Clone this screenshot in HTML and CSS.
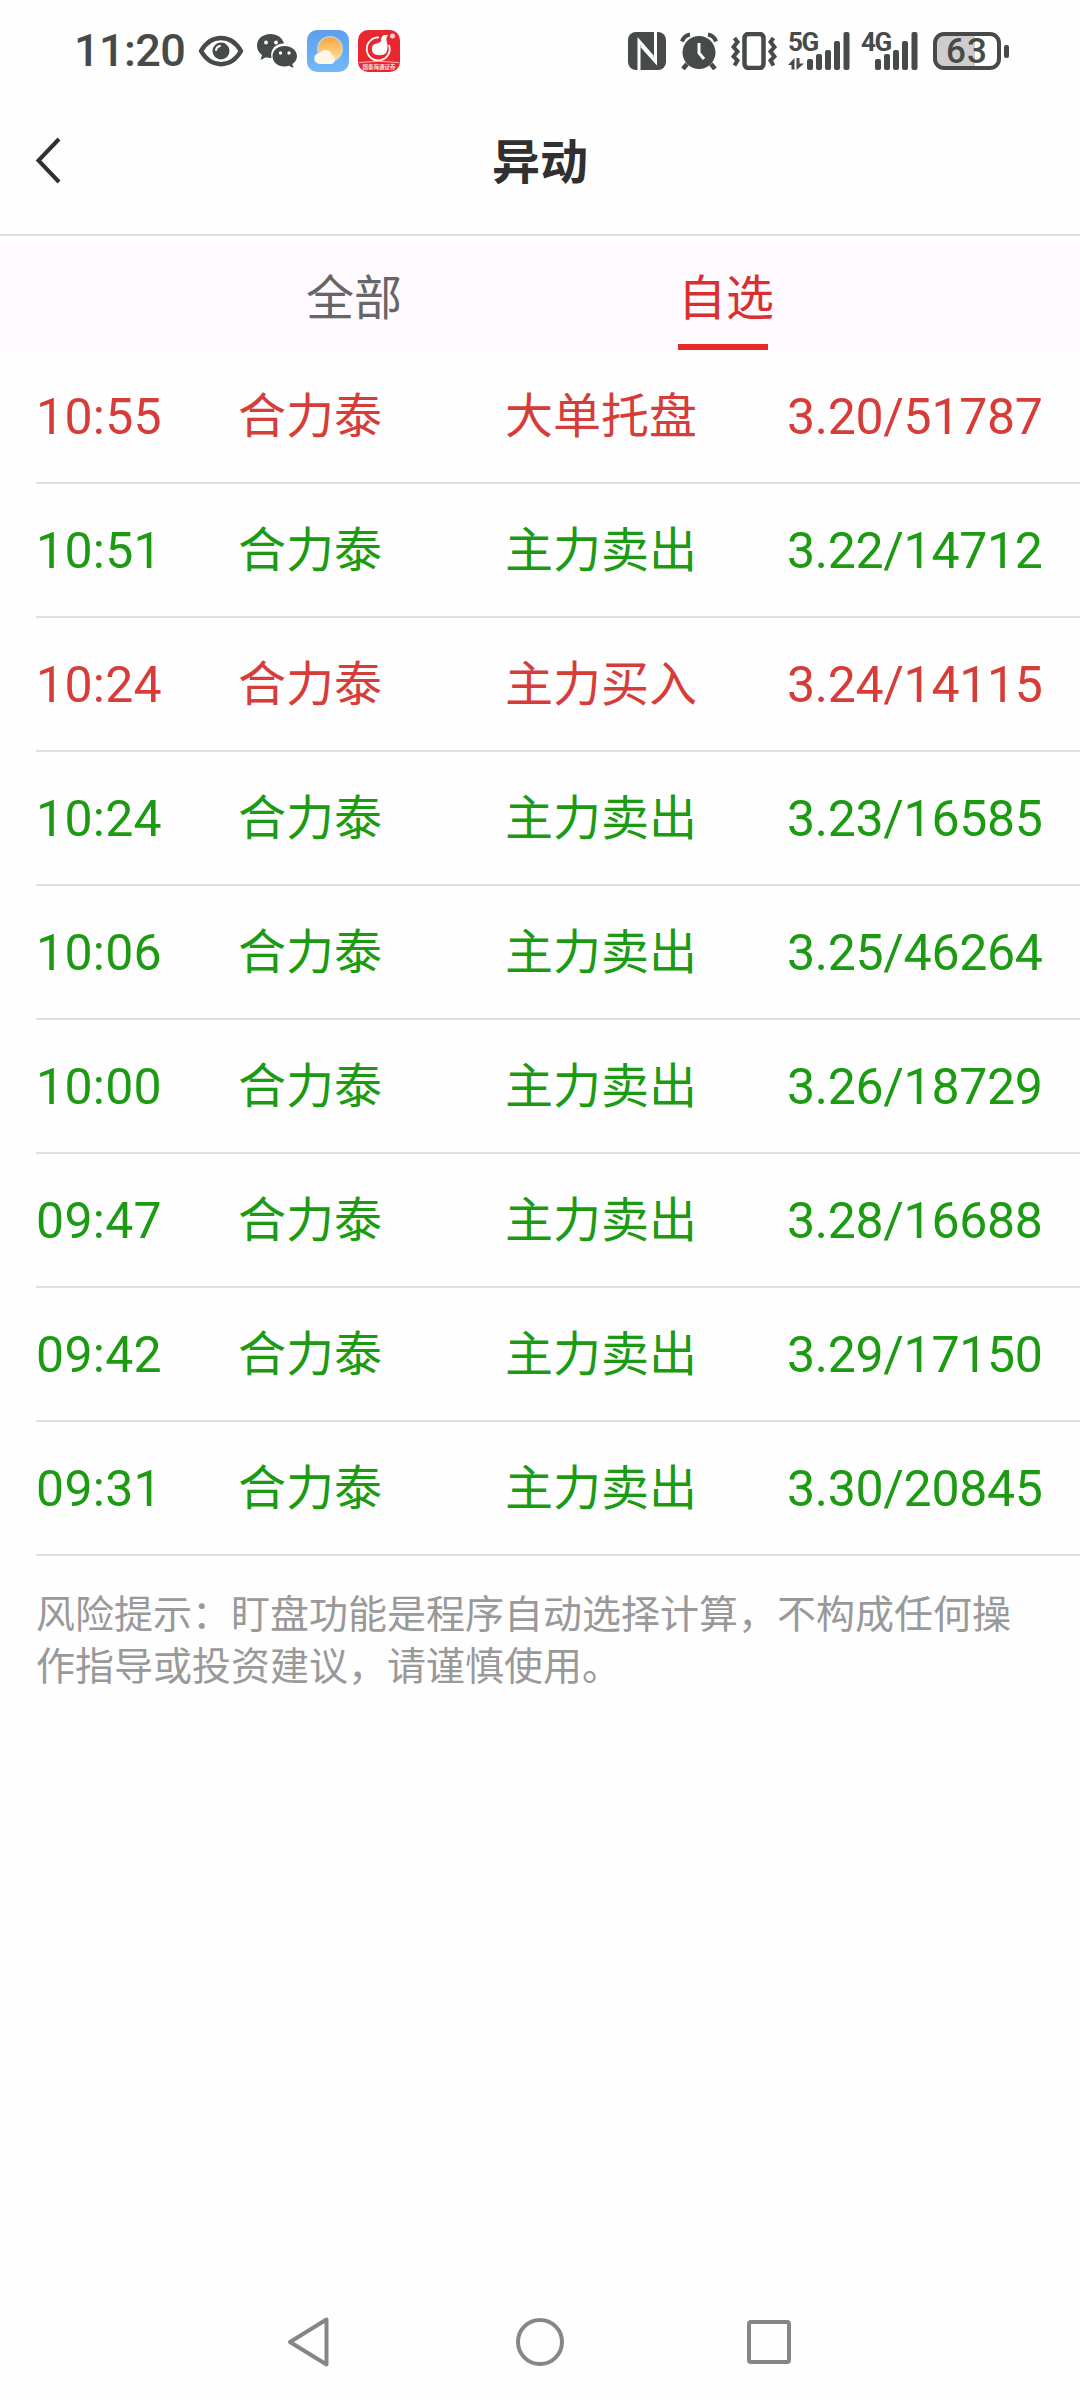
FILE: index.html
```html
<!DOCTYPE html>
<html lang="zh-CN">
<head>
<meta charset="utf-8">
<title>异动</title>
<link rel="stylesheet" href="styles.css">
</head>
<body>
<div class="status-bar">
  <div class="status-left">
    <span class="clock">11:20</span>
    <svg class="icon-eye" width="46" height="32" viewBox="0 0 46 32"><path d="M3 16C13-1.500 33-1.500 43 16C33 33.500 13 33.500 3 16Z" fill="none" stroke="#464b48" stroke-width="4.500" stroke-linejoin="round"/><circle cx="23" cy="16" r="8.500" fill="#464b48"/><path d="M18 15a5 5 0 0 1 4-4" fill="none" stroke="#fff" stroke-width="2" stroke-linecap="round"/></svg>
    <svg class="icon-chat" width="42" height="36" viewBox="0 0 42 36"><path d="M14.500 1C6.500 1 1 6 1 12.800c0 4 2 7.200 5 9.300L4.500 27l5.500-2.700c2 .5 3.500.7 5.500.6-2-9 5-14.500 12.500-14.300C26.500 4.500 21 1 14.500 1Z" fill="#464b48"/><path d="M28.500 13C21.500 13 16.500 17.500 16.500 23.300s5 10.200 12 10.200c1.500 0 3-.2 4.500-.7l4.500 2.200-1.200-3.900c2.800-1.900 4.700-4.600 4.700-7.800C41 17.500 35.500 13 28.500 13Z" fill="#464b48"/><g fill="#fff"><circle cx="10" cy="9.500" r="1.900"/><circle cx="20" cy="9.500" r="1.900"/><circle cx="24.500" cy="20" r="1.700"/><circle cx="33" cy="20" r="1.700"/></g></svg>
    <svg class="icon-weather" width="42" height="42" viewBox="0 0 42 42"><defs><linearGradient id="sky" x2="0" y2="1"><stop stop-color="#5c9fec"/><stop offset="1" stop-color="#72b9f8"/></linearGradient><linearGradient id="sun" x2="0" y2="1"><stop stop-color="#f8a63c"/><stop offset="1" stop-color="#fde39a"/></linearGradient></defs><rect width="42" height="42" rx="10" fill="url(#sky)"/><circle cx="23" cy="19" r="13" fill="#bcd6e6"/><circle cx="23" cy="19" r="11.800" fill="url(#sun)"/><path d="M13 34a5.500 5.500 0 0 1-.5-11 7 7 0 0 1 12.500 2 4.700 4.700 0 0 1-1 9Z" fill="#fff6e6"/></svg>
    <svg class="icon-broker" width="42" height="42" viewBox="0 0 42 42"><rect width="42" height="42" rx="10" fill="#e8272f"/><path d="M21 7.500A11.500 11.500 0 1 0 31 15" fill="none" stroke="#fff" stroke-width="1.800"/><path d="M15 15c2-2 6-1 8-4 0-3 1-6 4-6h3c-1 2-2 3-1.500 6 1.500 3 1.500 9-.5 12-3 3-10 3-13 0-1.500-3-1.500-6 0-8Z" fill="#fff"/><circle cx="34.500" cy="6" r="2.500" fill="#ffd5d5"/><path d="M1 32.500Q21 30 41 32.500" fill="none" stroke="#ffb5b5"/><text class="broker-name" x="21" y="39" text-anchor="middle">国泰海通证券</text></svg>
  </div>
  <div class="status-right">
    <svg class="icon-nfc" width="38" height="38" viewBox="0 0 38 38"><rect width="38" height="38" rx="8" fill="#464b48"/><path d="M11 38V9L25 25M27.500 0V29.500L13.500 14" fill="none" stroke="#fff" stroke-width="3"/></svg>
    <svg class="icon-alarm" width="38" height="38" viewBox="0 0 38 38"><circle cx="19" cy="20.500" r="16.500" fill="#464b48"/><path d="M2 9.500Q4 3.500 10 2.500M36 9.500Q34 3.500 28 2.500" fill="none" stroke="#464b48" stroke-width="4"/><path d="M7 32l-4 5M31 32l4 5" stroke="#464b48" stroke-width="4.500"/><path d="M19 11v10l5 6" fill="none" stroke="#fff" stroke-width="3"/></svg>
    <svg class="icon-vibrate" width="46" height="38" viewBox="0 0 46 38"><rect x="13.500" y="2" width="19" height="34" rx="4" fill="none" stroke="#464b48" stroke-width="4.500"/><path d="M3.500 6l3 4-4 5 4 4.500-4 5 4 4-3 5M42.500 6l-3 4 4 5-4 4.500 4 5-4 4 3 5" fill="none" stroke="#464b48" stroke-width="4"/></svg>
    <div class="signal signal-5g"><span class="net">5G</span>
      <svg width="62" height="38" viewBox="0 0 62 38"><g fill="#464b48"><rect x="19" y="27" width="6" height="11" rx="2"/><rect x="28" y="22" width="6" height="16" rx="2"/><rect x="37" y="18" width="6" height="20" rx="2"/><rect x="46" y="9" width="6" height="29" rx="2"/><rect x="55.500" y="0" width="6" height="38" rx="2"/><path d="M0 33l6.500-7v11.500H3.500V33ZM8.500 26h3v5.500H16l-7.500 6.500Z"/></g></svg></div>
    <div class="signal signal-4g"><span class="net">4G</span>
      <svg width="57" height="38" viewBox="0 0 57 38"><g fill="#464b48"><rect x="14" y="27" width="6" height="11" rx="2"/><rect x="23" y="22" width="6" height="16" rx="2"/><rect x="32" y="18" width="6" height="20" rx="2"/><rect x="41" y="9" width="6" height="29" rx="2"/><rect x="50.500" y="0" width="6" height="38" rx="2"/></g></svg></div>
    <div class="battery"><span class="battery-body">63</span><span class="battery-nub"></span></div>
  </div>
</div>
<header class="title-bar">
  <svg class="back" width="28" height="48" viewBox="0 0 28 48"><path d="M25 3L4.500 24.500 25 46" fill="none" stroke="#303030" stroke-width="4"/></svg>
  <h1>异动</h1>
</header>
<nav class="tabs"><span class="tab tab-all">全部</span><span class="tab tab-active">自选</span></nav>
<main class="list">
  <div class="row up"><span class="time">10:55</span><span>合力泰</span><span>大单托盘</span><span class="quote">3.20/51787</span></div>
  <div class="row down"><span class="time">10:51</span><span>合力泰</span><span>主力卖出</span><span class="quote">3.22/14712</span></div>
  <div class="row up"><span class="time">10:24</span><span>合力泰</span><span>主力买入</span><span class="quote">3.24/14115</span></div>
  <div class="row down"><span class="time">10:24</span><span>合力泰</span><span>主力卖出</span><span class="quote">3.23/16585</span></div>
  <div class="row down"><span class="time">10:06</span><span>合力泰</span><span>主力卖出</span><span class="quote">3.25/46264</span></div>
  <div class="row down"><span class="time">10:00</span><span>合力泰</span><span>主力卖出</span><span class="quote">3.26/18729</span></div>
  <div class="row down"><span class="time">09:47</span><span>合力泰</span><span>主力卖出</span><span class="quote">3.28/16688</span></div>
  <div class="row down"><span class="time">09:42</span><span>合力泰</span><span>主力卖出</span><span class="quote">3.29/17150</span></div>
  <div class="row down"><span class="time">09:31</span><span>合力泰</span><span>主力卖出</span><span class="quote">3.30/20845</span></div>
</main>
<p class="notice">风险提示：盯盘功能是程序自动选择计算，不构成任何操<br>作指导或投资建议，请谨慎使用。</p>
<footer class="nav-bar">
  <svg width="46" height="54" viewBox="0 0 46 54"><path d="M40.500 4.500V49.500L4 27Z" fill="none" stroke="#858686" stroke-width="4" stroke-linejoin="round"/></svg>
  <svg width="48" height="48" viewBox="0 0 48 48"><circle cx="24" cy="24" r="22" fill="none" stroke="#858686" stroke-width="4"/></svg>
  <svg width="44" height="44" viewBox="0 0 44 44"><rect x="2" y="2" width="40" height="40" rx="2" fill="none" stroke="#858686" stroke-width="4"/></svg>
</footer>
</body>
</html>
```
FILE: styles.css
```css
* { box-sizing: border-box; }
body {
  margin: 0;
  width: 1080px;
  height: 2400px;
  display: flex;
  flex-direction: column;
  background: #fefefe;
  font-family: Roboto, "Noto Sans CJK SC", sans-serif;
  font-size: 48px;
}
svg { display: block; flex: none; }
.status-bar {
  height: 90px;
  padding: 12px 71px 0 74px;
  display: flex;
  justify-content: space-between;
  align-items: center;
  color: #464b48;
}
.status-left, .status-right { display: flex; align-items: center; }
.clock { width: 124px; font-size: 45px; font-weight: 500; line-height: 50px; letter-spacing: -0.6px; }
.icon-chat { margin-left: 12px; }
.icon-weather { margin-left: 9px; }
.icon-broker { margin-left: 9px; }
.broker-name { font-family: "Noto Sans CJK SC", sans-serif; font-size: 5.5px; font-weight: 700; fill: #ffe3e3; }
.icon-alarm { margin-left: 14px; }
.icon-vibrate { margin-left: 13px; }
.signal { position: relative; height: 38px; }
.signal-5g { margin-left: 11px; }
.signal-4g { margin-left: 11px; }
.net {
  position: absolute;
  left: 0;
  top: -3px;
  font-size: 26px;
  line-height: 26px;
  font-weight: 700;
  letter-spacing: -1.5px;
}
.battery { display: flex; align-items: center; gap: 3px; margin-left: 15px; }
.battery-body {
  width: 68px;
  height: 38px;
  border: 4px solid #464b48;
  border-radius: 11px;
  background: linear-gradient(90deg, #cfcccf 63%, #fefefe 63%);
  font-size: 35px;
  line-height: 31px;
  font-weight: 500;
  letter-spacing: 1px;
  text-align: center;
}
.battery-nub { width: 5px; height: 13px; border-radius: 2px; background: #464b48; }
.title-bar {
  height: 146px;
  padding: 1px 34px 0;
  border-bottom: 2px solid #dedede;
  display: grid;
  grid-template-columns: 28px 1fr 28px;
  align-items: center;
}
.back { margin-bottom: 5px; }
.title-bar h1 { margin: 0; font-size: 48px; font-weight: 700; line-height: 60px; text-align: center; color: #303030; }
.tabs {
  height: 105px;
  margin-top: 9px;
  padding-left: 306px;
  display: flex;
  gap: 276px;
  background: #fffaff;
  line-height: 108px;
  color: #666;
}
.tab { width: 96px; }
.tab-active { position: relative; color: #d9302f; }
.tab-active::after {
  content: "";
  position: absolute;
  left: 0;
  bottom: -3px;
  bottom: 0;
  width: 90px;
  height: 6px;
  background: #e52a28;
}
.list { margin-left: 36px; }
.row {
  height: 134px;
  border-bottom: 2px solid #dedede;
  display: grid;
  grid-template-columns: 202px 267px 282px 1fr;
  line-height: 134px;
  white-space: nowrap;
}
.up { color: #d63c38; }
.down { color: #1b9a12; }
.time, .quote { font-size: 50px; line-height: 134px; }
.time { letter-spacing: 0.3px; }
.quote { letter-spacing: -0.3px; }
.notice { margin: 33px 36px 0; font-size: 39px; line-height: 52px; color: #999; white-space: nowrap; }
.nav-bar {
  height: 116px;
  margin-top: auto;
  padding: 0 289px 0 286px;
  display: flex;
  justify-content: space-between;
  align-items: center;
}
```
